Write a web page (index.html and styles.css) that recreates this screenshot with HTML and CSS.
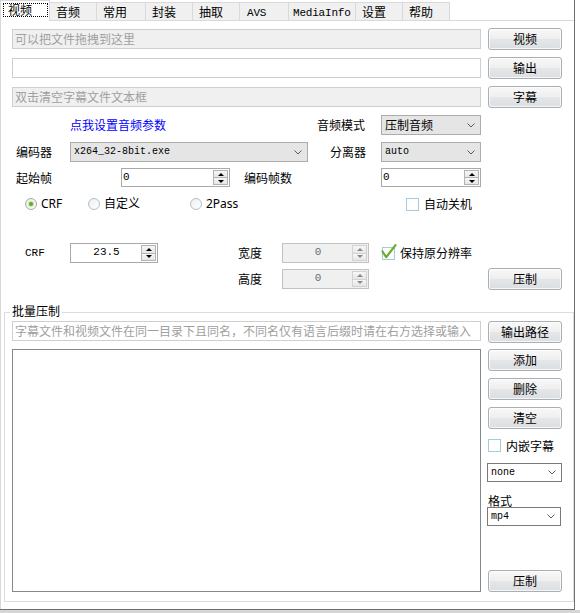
FILE: index.html
```html
<!DOCTYPE html>
<html lang="zh-CN">
<head>
<meta charset="utf-8">
<title>压制</title>
<link rel="stylesheet" href="styles.css">
</head>
<body>
<div class="window">
  <div class="tabs">
    <div class="tab t1 sel"><span class="focus">视频</span></div>
    <div class="tab t2">音频</div>
    <div class="tab t3">常用</div>
    <div class="tab t4">封装</div>
    <div class="tab t5">抽取</div>
    <div class="tab t6 mono">AVS</div>
    <div class="tab t7 mono">MediaInfo</div>
    <div class="tab t8">设置</div>
    <div class="tab t9">帮助</div>
  </div>
  <div class="panel">
    <div class="row r1">
      <div class="tb dis main">可以把文件拖拽到这里</div>
      <div class="btn">视频</div>
    </div>
    <div class="row r2">
      <div class="tb main"></div>
      <div class="btn">输出</div>
    </div>
    <div class="row r3">
      <div class="tb dis main">双击清空字幕文件文本框</div>
      <div class="btn">字幕</div>
    </div>
    <div class="row r4">
      <span class="lbl link">点我设置音频参数</span>
      <span class="lbl l-mode">音频模式</span>
      <div class="combo c100"><span>压制音频</span><svg class="chev" viewBox="0 0 8 5"><path d="M0.5 0.5 L4 4 L7.5 0.5" fill="none" stroke="#5a5a5a" stroke-width="1"/></svg></div>
    </div>
    <div class="row r5">
      <span class="lbl l-enc">编码器</span>
      <div class="combo c-enc"><span class="mono small">x264_32-8bit.exe</span><svg class="chev" viewBox="0 0 8 5"><path d="M0.5 0.5 L4 4 L7.5 0.5" fill="none" stroke="#5a5a5a" stroke-width="1"/></svg></div>
      <span class="lbl l-demux">分离器</span>
      <div class="combo c100"><span class="mono small">auto</span><svg class="chev" viewBox="0 0 8 5"><path d="M0.5 0.5 L4 4 L7.5 0.5" fill="none" stroke="#5a5a5a" stroke-width="1"/></svg></div>
    </div>
    <div class="row r6">
      <span class="lbl l-start">起始帧</span>
      <div class="num n-start"><span class="val mono">0</span><span class="spin"><i class="up"></i><i class="down"></i></span></div>
      <span class="lbl l-count">编码帧数</span>
      <div class="num n-count"><span class="val mono">0</span><span class="spin"><i class="up"></i><i class="down"></i></span></div>
    </div>
    <div class="row r7">
      <div class="radio o1"><span class="rb on"></span><span class="txt">CRF</span></div>
      <div class="radio o2"><span class="rb"></span><span class="txt">自定义</span></div>
      <div class="radio o3"><span class="rb"></span><span class="txt">2Pass</span></div>
      <div class="chk"><span class="cb"></span><span>自动关机</span></div>
    </div>
    <div class="row r8">
      <span class="lbl l-crf mono">CRF</span>
      <div class="num center n-crf"><span class="val mono">23.5</span><span class="spin"><i class="up"></i><i class="down"></i></span></div>
      <span class="lbl l-w">宽度</span>
      <div class="num center dis n-wh"><span class="val mono">0</span><span class="spin"><i class="up"></i><i class="down"></i></span></div>
      <div class="chk c-keep"><span class="cb"><svg class="tick" width="16" height="16" viewBox="0 0 16 16"><path d="M1.5 7.5 L5.2 13.2 L14.5 1.2" fill="none" stroke="#6aaa2c" stroke-width="2.2" stroke-linecap="round" stroke-linejoin="round"/></svg></span><span>保持原分辨率</span></div>
    </div>
    <div class="row r9">
      <span class="lbl l-h">高度</span>
      <div class="num center dis n-wh"><span class="val mono">0</span><span class="spin"><i class="up"></i><i class="down"></i></span></div>
      <div class="btn b-run">压制</div>
    </div>
    <div class="group">
      <span class="group-title">批量压制</span>
      <div class="grow">
        <div class="tb main hint">字幕文件和视频文件在同一目录下且同名，不同名仅有语言后缀时请在右方选择或输入</div>
        <div class="btn">输出路径</div>
      </div>
      <div class="gbody">
        <div class="list"></div>
        <div class="side">
          <div class="btn">添加</div>
          <div class="btn mt7">删除</div>
          <div class="btn mt7">清空</div>
          <div class="chk s-chk"><span class="cb"></span><span>内嵌字幕</span></div>
          <div class="combo edit s-none"><span class="mono small">none</span><svg class="chev" viewBox="0 0 8 5"><path d="M0.5 0.5 L4 4 L7.5 0.5" fill="none" stroke="#5a5a5a" stroke-width="1"/></svg></div>
          <div class="s-lbl">格式</div>
          <div class="combo edit s-fmt"><span class="mono small">mp4</span><svg class="chev" viewBox="0 0 8 5"><path d="M0.5 0.5 L4 4 L7.5 0.5" fill="none" stroke="#5a5a5a" stroke-width="1"/></svg></div>
          <div class="btn push">压制</div>
        </div>
      </div>
    </div>
  </div>
</div>
<div class="shade"></div>
</body>
</html>
```

FILE: styles.css
```css
* { box-sizing: border-box; }
html, body { margin: 0; padding: 0; }
body {
  width: 580px;
  height: 613px;
  overflow: hidden;
  background: #fff;
  font-family: "Noto Sans CJK SC", "Noto Sans", sans-serif;
  font-size: 12px;
  line-height: 14px;
  color: #000;
}
.mono { font-family: "Liberation Mono", "DejaVu Sans Mono", monospace; font-size: 11px; }
.mono.small { font-size: 10px; }

.window {
  width: 575px;
  height: 610px;
  border-right: 1px solid #6f6f6f;
  border-bottom: 1px solid #6f6f6f;
  background: #fff;
  display: flex;
  flex-direction: column;
}
.shade { height: 3px; background: #d6d6d6; }

/* tabs */
.tabs {
  display: flex;
  align-items: flex-end;
  height: 21px;
  border-bottom: 1px solid #d9d9d9;
  flex: none;
}
.tab {
  height: 18px;
  border-top: 1px solid #d9d9d9;
  border-right: 1px solid #d9d9d9;
  background: #f0f0f0;
  padding: 2px 0 0 6px;
  line-height: 14px;
  white-space: nowrap;
  flex: none;
}
.tab.mono { letter-spacing: -0.2px; padding-top: 3px; }
.tab.sel {
  height: 21px;
  margin-bottom: -1px;
  background: #fff;
  border-left: 1px solid #d9d9d9;
  padding: 2px 0 0 2px;
}
.focus {
  display: block;
  width: 45px;
  height: 14px;
  border: 1px dotted #000;
  padding-left: 4px;
  line-height: 12px;
}
.t1 { width: 50px; } .t2 { width: 47px; } .t3 { width: 49px; }
.t4 { width: 47px; } .t5 { width: 47px; } .t6 { width: 49px; padding-left: 7px; }
.t7 { width: 67px; padding-left: 4px; } .t8 { width: 47px; } .t9 { width: 47px; }

/* panel */
.panel {
  flex: 1;
  box-shadow: inset 1px 0 0 #d9d9d9;
  padding-top: 7px;
  display: flex;
  flex-direction: column;
}
.row { display: flex; align-items: center; flex: none; }
.r1 { height: 22px; }
.r2, .r3 { height: 22px; margin-top: 7px; }
.r4, .r5 { height: 20px; margin-top: 7px; }
.r6 { height: 19px; margin-top: 6px; }
.r7 { height: 16px; margin-top: 9px; }
.r8 { height: 20px; margin-top: 31px; }
.r9 { height: 22px; margin-top: 5px; }

.lbl { white-space: nowrap; flex: none; }
.link { color: #0000ff; margin-left: 70px; width: 247px; }
.l-mode { width: 64px; }
.l-enc { margin-left: 16px; width: 54px; }
.l-demux { margin-left: 22px; width: 51px; }
.l-start { margin-left: 16px; width: 105px; }
.l-count { margin-left: 14px; width: 137px; }
.l-crf { margin-left: 25px; width: 45px; }
.l-w { margin-left: 80px; width: 44px; }
.l-h { margin-left: 238px; width: 44px; }

/* text boxes */
.tb {
  height: 20px;
  border: 1px solid #cfcfcf;
  background: #fff;
  padding: 0 2px;
  line-height: 18px;
  color: #a0a0a0;
  white-space: nowrap;
  overflow: hidden;
  flex: none;
}
.tb.main { margin-left: 12px; width: 469px; }
.tb.dis { background: #f0f0f0; }

/* buttons */
.btn {
  flex: none;
  width: 74px;
  height: 22px;
  margin-left: 7px;
  border: 1px solid #a9aeb3;
  border-radius: 3px;
  background: linear-gradient(#f8f8f8, #efefef 48%, #e4e6e8 52%, #dcdfe2);
  box-shadow: inset 0 0 0 1px rgba(255, 255, 255, 0.75);
  display: flex;
  align-items: center;
  justify-content: center;
  line-height: 14px;
  white-space: nowrap;
}
.b-run { margin-left: 119px; }

/* combos */
.combo {
  flex: none;
  height: 20px;
  border: 1px solid #acacac;
  background: #e5e5e5;
  display: flex;
  align-items: center;
  padding-left: 3px;
  white-space: nowrap;
}
.combo .chev { margin-left: auto; margin-right: 5px; width: 8px; height: 5px; flex: none; }
.c100 { width: 100px; }
.c-enc { width: 238px; }
.combo.edit { background: #fff; border-color: #7a7a7a; height: 19px; }

/* numeric up/down */
.num {
  flex: none;
  height: 20px;
  border: 1px solid #a9a9a9;
  background: #fff;
  display: flex;
}
.r6 .num { height: 19px; }
.num .val { flex: 1; padding-left: 1px; line-height: 17px; white-space: nowrap; }
.num.center .val { text-align: center; }
.n-start { width: 109px; }
.n-count { width: 100px; }
.n-crf { width: 88px; }
.n-wh { width: 87px; }
.spin {
  width: 15px;
  display: flex;
  flex-direction: column;
  margin: 1px 1px 1px 0;
  flex: none;
}
.spin i {
  flex: 1;
  border: 1px solid #b3b3b3;
  background: linear-gradient(#f7f7f7, #e6e6e6);
  display: flex;
  align-items: center;
  justify-content: center;
}
.spin i.down { border-top: none; }
.spin i.up::after, .spin i.down::after {
  content: "";
  width: 0;
  height: 0;
  border-left: 3px solid transparent;
  border-right: 3px solid transparent;
}
.spin i.up::after { border-bottom: 3px solid #000; }
.spin i.down::after { border-top: 3px solid #000; }
.num.dis { background: #f0f0f0; border-color: #c2c2c2; color: #6d6d6d; }
.num.dis .spin i { border-color: #d2d2d2; }
.num.dis .spin i.up::after { border-bottom-color: #8a8a8a; }
.num.dis .spin i.down::after { border-top-color: #8a8a8a; }

/* radios */
.radio { display: flex; align-items: center; flex: none; }
.radio .txt { font-family: "Noto Sans", "Noto Sans CJK SC", sans-serif; white-space: nowrap; }
.o1 { margin-left: 25px; width: 63px; }
.o2 { width: 102px; }
.o3 { width: 216px; }
.rb {
  width: 12px;
  height: 12px;
  border-radius: 50%;
  border: 1px solid #a9c3d1;
  background: linear-gradient(135deg, #eeeeee, #ffffff);
  margin-right: 4px;
  flex: none;
  display: flex;
  align-items: center;
  justify-content: center;
}
.rb.on { border-color: #a7a7a7; }
.rb.on::after {
  content: "";
  width: 4px;
  height: 4px;
  border-radius: 50%;
  background: #5fae2e;
  box-shadow: 0 0 1px 1px #bfe39a;
}

/* checkboxes */
.chk { display: flex; align-items: center; flex: none; white-space: nowrap; }
.cb {
  width: 13px;
  height: 13px;
  border: 1px solid #a4cddb;
  background: #fff;
  margin-right: 5px;
  position: relative;
  flex: none;
}
.cb .tick { position: absolute; left: -2px; top: -4px; }
.c-keep { margin-left: 13px; }

/* batch group */
.group {
  flex: none;
  margin-top: 22px;
  margin-left: 4px;
  width: 570px;
  height: 290px;
  border: 1px solid #dcdcdc;
  position: relative;
  padding-top: 8px;
}
.group-title {
  position: absolute;
  left: 5px;
  top: -10px;
  background: #fff;
  padding: 0 2px;
  line-height: 16px;
}
.grow { display: flex; align-items: flex-start; height: 22px; }
.tb.hint { margin-left: 7px; }
.gbody { display: flex; margin-top: 6px; }
.list {
  flex: none;
  margin-left: 7px;
  width: 469px;
  height: 243px;
  border: 1px solid #828790;
  background: #fff;
}
.side {
  flex: none;
  margin-left: 6px;
  width: 75px;
  height: 243px;
  display: flex;
  flex-direction: column;
}
.side .btn { margin-left: 1px; }
.side .mt7 { margin-top: 7px; }
.s-chk { margin-top: 10px; margin-left: 1px; height: 13px; }
.s-none { margin-top: 11px; width: 75px; }
.s-lbl { margin-top: 12px; margin-left: 1px; line-height: 13px; height: 13px; }
.s-fmt { width: 74px; }
.side .push { margin-top: auto; }
```
